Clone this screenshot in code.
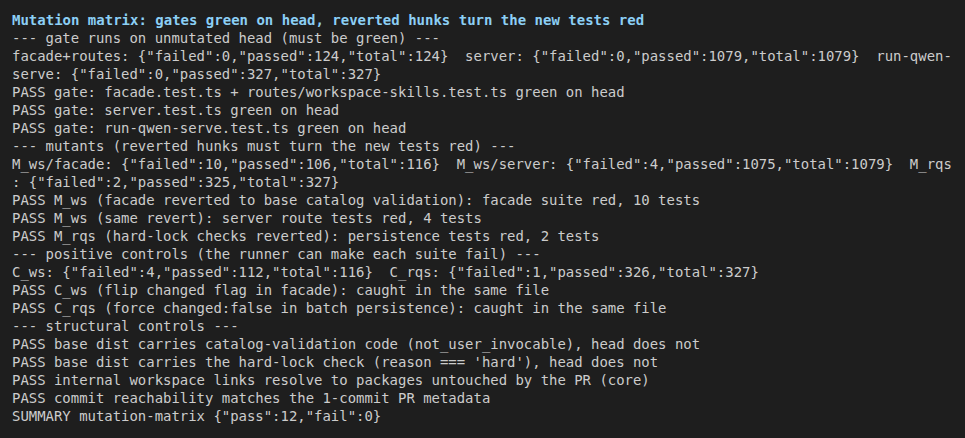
import React from "react";

const lines: string[] = [
  "--- gate runs on unmutated head (must be green) ---",
  'facade+routes: {"failed":0,"passed":124,"total":124}  server: {"failed":0,"passed":1079,"total":1079}  run-qwen-',
  'serve: {"failed":0,"passed":327,"total":327}',
  "PASS gate: facade.test.ts + routes/workspace-skills.test.ts green on head",
  "PASS gate: server.test.ts green on head",
  "PASS gate: run-qwen-serve.test.ts green on head",
  "--- mutants (reverted hunks must turn the new tests red) ---",
  'M_ws/facade: {"failed":10,"passed":106,"total":116}  M_ws/server: {"failed":4,"passed":1075,"total":1079}  M_rqs',
  ': {"failed":2,"passed":325,"total":327}',
  "PASS M_ws (facade reverted to base catalog validation): facade suite red, 10 tests",
  "PASS M_ws (same revert): server route tests red, 4 tests",
  "PASS M_rqs (hard-lock checks reverted): persistence tests red, 2 tests",
  "--- positive controls (the runner can make each suite fail) ---",
  'C_ws: {"failed":4,"passed":112,"total":116}  C_rqs: {"failed":1,"passed":326,"total":327}',
  "PASS C_ws (flip changed flag in facade): caught in the same file",
  "PASS C_rqs (force changed:false in batch persistence): caught in the same file",
  "--- structural controls ---",
  "PASS base dist carries catalog-validation code (not_user_invocable), head does not",
  "PASS base dist carries the hard-lock check (reason === 'hard'), head does not",
  "PASS internal workspace links resolve to packages untouched by the PR (core)",
  "PASS commit reachability matches the 1-commit PR metadata",
  'SUMMARY mutation-matrix {"pass":12,"fail":0}',
];

export default function App() {
  return (
    <div className="w-[965px] h-[438px] bg-[#1e1e1e] overflow-hidden pt-[11px] pl-[12px] font-['DejaVu_Sans_Mono',monospace]">
      <div className="whitespace-pre text-[14px] leading-[18px] font-bold text-[#8ccff5]">
        Mutation matrix: gates green on head, reverted hunks turn the new tests red
      </div>
      {lines.map((l, i) => (
        <div key={i} className="whitespace-pre text-[13.95px] leading-[18px] text-[#cccccc]">
          {l}
        </div>
      ))}
    </div>
  );
}
